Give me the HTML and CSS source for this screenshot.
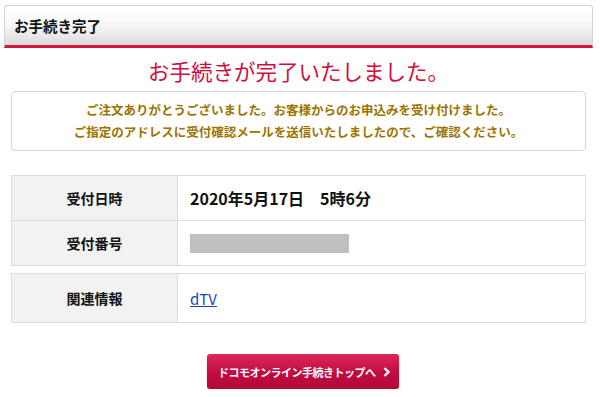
FILE: index.html
```html
<!DOCTYPE html>
<html lang="ja">
<head>
<meta charset="utf-8">
<title>お手続き完了</title>
<link rel="stylesheet" href="styles.css">
</head>
<body>
    <div class="page-head">
        <h2>お手続き完了</h2>
    </div>
    <div class="container">
        <h1 class="done-title">お手続きが完了いたしました。</h1>
        <div class="notice">
            <p>ご注文ありがとうございました。お客様からのお申込みを受け付けました。</p>
            <p>ご指定のアドレスに受付確認メールを送信いたしましたので、ご確認ください。</p>
        </div>

        <table class="info">
            <tr>
                <th>受付日時</th>
                <td class="strong">2020年5月17日　5時6分</td>
            </tr>
            <tr>
                <th>受付番号</th>
                <td><span class="masked"></span></td>
            </tr>
        </table>

        <table class="info related">
            <tr>
                <th>関連情報</th>
                <td><a href="#">dTV</a></td>
            </tr>
        </table>

        <div class="actions">
            <a class="btn" href="#"><span>ドコモオンライン手続きトップへ</span>
                <svg width="8" height="10" viewBox="0 0 8 10"><path d="M1.5 1 L5.5 5 L1.5 9" fill="none" stroke="#fff" stroke-width="2.4"/></svg>
            </a>
        </div>
    </div>
</body>
</html>
```

FILE: styles.css
```css
body{
    margin: 0;
    font-family: "Noto Sans CJK JP", "Noto Sans", sans-serif;
    color: #111;
    background: #fff;
}
.page-head{
    margin: 5px 7px 0 4px;
    height: 39px;
    border: 1px solid #d4d4d4;
    border-bottom: 3px solid #d6173e;
    border-radius: 3px 3px 0 0;
    background: linear-gradient(#fff 0%, #fafafa 40%, #dcdcdc 100%);
    display: flex;
    align-items: center;
    padding-left: 9px;
}
.page-head h2{
    margin: 0;
    font-size: 14.5px;
    font-weight: bold;
}
.container{
    margin: 0 14px 0 11px;
}
.done-title{
    margin: 0;
    height: 43px;
    padding-top: 1px;
    box-sizing: border-box;
    display: flex;
    align-items: center;
    justify-content: center;
    color: #d20d3c;
    font-size: 21.5px;
    font-weight: normal;
}
.notice{
    border: 1px solid #d8d8d8;
    border-radius: 4px;
    height: 60px;
    box-sizing: border-box;
    display: flex;
    flex-direction: column;
    justify-content: center;
    text-align: center;
    color: #9c7400;
    font-size: 12.5px;
    font-weight: bold;
}
.notice p{
    margin: 0;
    line-height: 22px;
}
.info{
    width: 100%;
    border-collapse: collapse;
    margin-top: 24px;
}
.info th, .info td{
    border: 1px solid #dcdcdc;
    height: 44px;
    padding: 0;
}
.info th{
    width: 165px;
    background: #f2f2f2;
    font-size: 14px;
    font-weight: bold;
    text-align: center;
}
.info td{
    padding-left: 12px;
    font-size: 14px;
}
.info td.strong{
    font-size: 16px;
    font-weight: bold;
}
.masked{
    display: block;
    width: 159px;
    height: 19px;
    background: #c0c0c0;
}
.related{
    margin-top: 7px;
}
.related th, .related td{
    height: 48px;
}
.related a{
    color: #1c3fc6;
    font-size: 15px;
}
.actions{
    display: flex;
    justify-content: center;
    margin-top: 31px;
    padding-left: 9px;
}
.btn{
    display: flex;
    align-items: center;
    justify-content: space-between;
    width: 192px;
    height: 35px;
    box-sizing: border-box;
    padding: 0 8px 0 11px;
    border-radius: 3px;
    background: linear-gradient(#dc2a58, #c10b3f 55%, #b20a37);
    box-shadow: 0 1px 2px rgba(0,0,0,0.25);
    color: #fff;
    font-size: 11px;
    font-weight: bold;
    text-decoration: none;
    white-space: nowrap;
    letter-spacing: -0.5px;
}
```
